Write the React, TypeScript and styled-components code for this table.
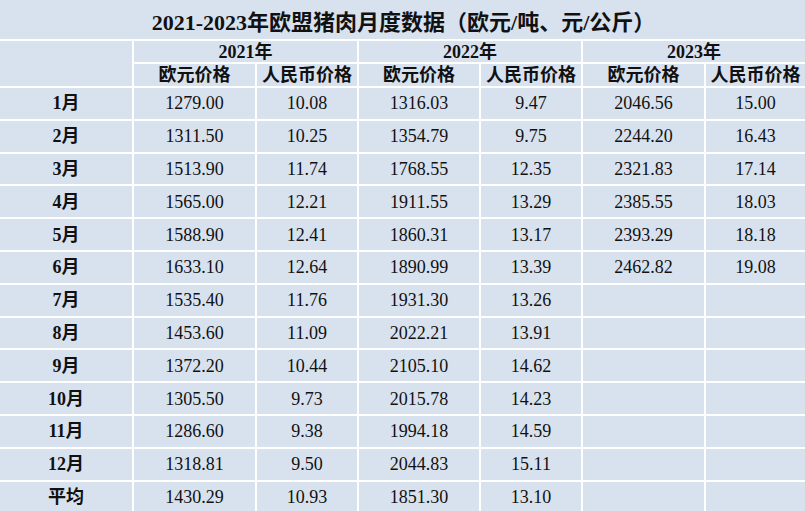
import styled, { createGlobalStyle } from "styled-components";

const GlobalStyle = createGlobalStyle`
  html, body {
    margin: 0;
    padding: 0;
    background: #d8e2ef;
    overflow: hidden;
  }
`;

const cellBg = "#d8e2ef";
const serif = `"Liberation Serif", "Noto Sans CJK SC", serif`;

const Page = styled.div`
  width: 805px;
  height: 511px;
  background: ${cellBg};
  color: #111;
  font-family: ${serif};
  overflow: hidden;
`;

const Title = styled.div`
  height: 39px;
  display: flex;
  align-items: center;
  justify-content: center;
  border-bottom: 2px solid #fff;
  font-size: 22px;
  font-weight: bold;
  padding-left: 2px;
`;

const Table = styled.div`
  display: grid;
  grid-template-columns: 132px 121px 100px 120px 100px 121px 99px;
  grid-template-rows: 21px 22px;
  grid-auto-rows: 30.8px;
  gap: 2px;
  background: #fff;
`;

const Cell = styled.div<{ $bold?: boolean; $span?: number; $rows?: number }>`
  background: ${cellBg};
  display: flex;
  align-items: center;
  justify-content: center;
  font-size: 18px;
  font-weight: ${(p) => (p.$bold ? "bold" : "normal")};
  grid-column: span ${(p) => p.$span ?? 1};
  grid-row: span ${(p) => p.$rows ?? 1};
  white-space: nowrap;
  line-height: 1;
`;

const years = ["2021年", "2022年", "2023年"];

const rows: string[][] = [
  ["1月", "1279.00", "10.08", "1316.03", "9.47", "2046.56", "15.00"],
  ["2月", "1311.50", "10.25", "1354.79", "9.75", "2244.20", "16.43"],
  ["3月", "1513.90", "11.74", "1768.55", "12.35", "2321.83", "17.14"],
  ["4月", "1565.00", "12.21", "1911.55", "13.29", "2385.55", "18.03"],
  ["5月", "1588.90", "12.41", "1860.31", "13.17", "2393.29", "18.18"],
  ["6月", "1633.10", "12.64", "1890.99", "13.39", "2462.82", "19.08"],
  ["7月", "1535.40", "11.76", "1931.30", "13.26", "", ""],
  ["8月", "1453.60", "11.09", "2022.21", "13.91", "", ""],
  ["9月", "1372.20", "10.44", "2105.10", "14.62", "", ""],
  ["10月", "1305.50", "9.73", "2015.78", "14.23", "", ""],
  ["11月", "1286.60", "9.38", "1994.18", "14.59", "", ""],
  ["12月", "1318.81", "9.50", "2044.83", "15.11", "", ""],
  ["平均", "1430.29", "10.93", "1851.30", "13.10", "", ""],
];

export default function App() {
  return (
    <Page>
      <GlobalStyle />
      <Title>2021-2023年欧盟猪肉月度数据（欧元/吨、元/公斤）</Title>
      <Table>
        <Cell $rows={2} />
        {years.map((y) => (
          <Cell key={y} $bold $span={2}>
            {y}
          </Cell>
        ))}
        {years.map((y) => [
          <Cell key={y + "e"} $bold>
            欧元价格
          </Cell>,
          <Cell key={y + "r"} $bold>
            人民币价格
          </Cell>,
        ])}
        {rows.map((r) =>
          r.map((v, i) => (
            <Cell key={r[0] + i} $bold={i === 0}>
              {v}
            </Cell>
          ))
        )}
      </Table>
    </Page>
  );
}
